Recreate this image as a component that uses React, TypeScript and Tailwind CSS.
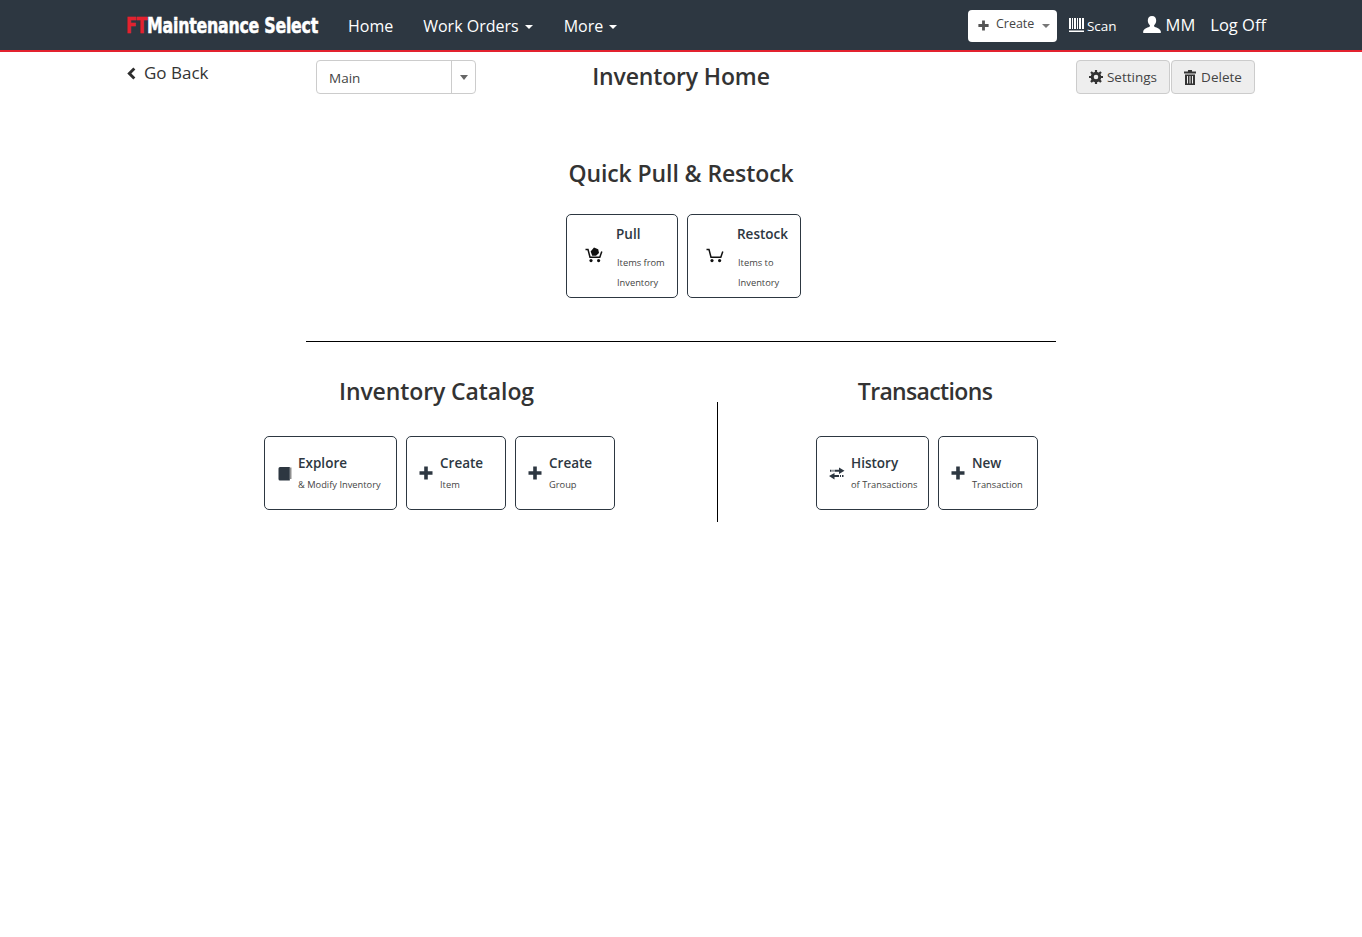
import React from "react";

const F = "font-['Open_Sans','Noto_Sans',sans-serif]";

function Plus({ className = "" }: { className?: string }) {
  return (
    <svg viewBox="0 0 14 14" className={className} fill="currentColor">
      <path d="M5.2 0.5h3.6v4.7h4.7v3.6H8.8v4.7H5.2V8.8H0.5V5.2h4.7z" />
    </svg>
  );
}

function Cart({ full = false }: { full?: boolean }) {
  return (
    <svg viewBox="0 0 18 16" className="w-[18px] h-[16px] text-[#111]" fill="none">
      <path d="M0.5 2.5H3L5 10.2H14.8L16.8 4.5" stroke="currentColor" strokeWidth="1.5" />
      <circle cx="6" cy="13.6" r="1.6" fill="currentColor" />
      <circle cx="13.6" cy="13.6" r="1.6" fill="currentColor" />
      {full && <path d="M9 0.5L13.2 2.2L14 6L11 8.8H7.2L5.6 4.5z" fill="currentColor" />}
    </svg>
  );
}

function Book() {
  return (
    <svg viewBox="0 0 14 15" className="w-[14px] h-[15px]">
      <path d="M12 1.500h1.500V13H12z" fill="#8f8f8f" />
      <path d="M0.500 2.500a1.500 1.500 0 0 1 1.500-1.500h9.800V14.500H2a1.500 1.500 0 0 1-1.500-1.500z" fill="#2d3741" />
    </svg>
  );
}

function Transfer() {
  return (
    <svg viewBox="0 0 16 13" className="w-[16px] h-[13px] text-[#2d3741]" fill="currentColor">
      <path d="M1 2.800h1.500v2H1zM3.500 2.800h1v2h-1zM5.500 2.800h4.500V0.500L15.500 3.800 10 6.900V4.800H5.500z" />
      <path d="M14.500 8h-1.500v2h1.500zM12 8h-1v2h1zM10 8H5.500V5.900L0 9.100 5.500 12.400V10H10z" />
    </svg>
  );
}

function Card({
  icon, title, lines, w, h, iconW, tall,
}: {
  icon: React.ReactNode; title: string; lines: string[]; w: string; h: string; iconW: string; tall?: boolean;
}) {
  return (
    <div className={`${w} ${h} ${iconW} flex items-center border border-[#2d3741] rounded-[5px] bg-white shrink-0`}>
      <div className="flex items-center shrink-0">{icon}</div>
      <div className={`flex flex-col min-w-0 ${tall ? "pt-[4px]" : "pt-[1px]"}`}>
        <div className={`text-[13.5px] font-semibold leading-[20px] text-[#2d3741] whitespace-nowrap ${tall ? "mb-[9px] -ml-[1px]" : "mb-[2px]"}`}>{title}</div>
        {lines.map((l) => (
          <div key={l} className="text-[9.3px] text-[#444] leading-[20px] whitespace-nowrap">{l}</div>
        ))}
      </div>
    </div>
  );
}

export default function App() {
  return (
    <div className={`${F} min-h-[937px] bg-white text-[#2d2d2d]`}>
      <nav className="h-[52px] bg-[#2d3741] border-b-2 border-[#e3222f]">
        <div className="w-[1170px] mx-auto h-[50px] flex items-center pl-[30px] text-white">
          <div className="w-[222px] h-[50px] flex items-center shrink-0 overflow-visible">
            <span className="font-['DejaVu_Sans',sans-serif] font-bold text-[20px] tracking-[-0.3px] whitespace-nowrap origin-left scale-x-[0.79] scale-y-[1.08] inline-block [-webkit-text-stroke:0.5px_currentColor]">
              <span className="text-[#e3222f]">FT</span>Maintenance Select
            </span>
          </div>
          <div className="flex items-center text-[16px] gap-[30px] pt-[1px]">
            <span>Home</span>
            <span className="flex items-center gap-[6px]">Work Orders <i className="w-0 h-0 mt-[3px] border-x-[4px] border-x-transparent border-t-[4px] border-t-white" /></span>
            <span className="flex items-center gap-[6px] ml-[1px]">More <i className="w-0 h-0 mt-[3px] border-x-[4px] border-x-transparent border-t-[4px] border-t-white" /></span>
          </div>
          <div className="ml-auto flex items-center text-[16.5px]">
            <div className="w-[89px] h-[32px] mt-[1px] bg-white rounded-[4px] text-[#444] flex items-center pl-[10px] text-[12.5px]">
              <Plus className="w-[11px] h-[11px] text-[#555] mr-[7px]" />
              <span className="-mt-[2px]">Create</span>
              <i className="w-0 h-0 ml-[8px] border-x-[4px] border-x-transparent border-t-[4px] border-t-[#777]" />
            </div>
            <svg viewBox="0 0 15 14" className="w-[15px] h-[14px] ml-[12px] text-white" fill="currentColor">
              <path d="M0 0h2v11H0zM3 0h1v11H3zM5 0h2v11H5zM8 0h1v11H8zM10 0h2v11h-2zM13 0h2v11h-2zM0 12.500h15V14H0z" />
            </svg>
            <span className="text-[13.5px] ml-[3px] pt-[2px]">Scan</span>
            <svg viewBox="0 0 18 17" className="w-[18px] h-[17px] ml-[26px] text-white -mt-[2px]" fill="currentColor">
              <path d="M9 0c2.800 0 4.200 2 4.200 4.600 0 2-.9 3.700-2 4.600-.3.500-.2 1.200.4 1.500 2.500 1.100 5.600 2 6.200 4.600V17H.2v-1.700c.6-2.600 3.700-3.500 6.200-4.600.6-.3.7-1 .4-1.500-1.100-.9-2-2.600-2-4.600C4.800 2 6.200 0 9 0z" />
            </svg>
            <span className="ml-[5px] pt-[1px]">MM</span>
            <span className="ml-[15px] pt-[1px]">Log Off</span>
          </div>
        </div>
      </nav>

      <main className="w-[1170px] mx-auto">
        <div className="grid grid-cols-[1fr_auto_1fr] items-start pt-[8px] h-[42px]">
          <div className="flex items-start pl-[30px]">
            <div className="w-[190px] flex items-center text-[17px] leading-[26px] text-[#333]">
              <svg viewBox="0 0 10 14" className="w-[10px] h-[13px] text-[#2d2d2d] mr-[8px]" fill="currentColor">
                <path d="M7.500 0.500L9.700 2.700 5.400 7l4.300 4.300L7.500 13.500 1 7z" />
              </svg>
              Go Back
            </div>
            <div className="w-[160px] h-[34px] flex border border-[#ccc] rounded-[4px] text-[13.5px] text-[#444]">
              <div className="flex-1 flex items-center pl-[12px] pt-[2px] border-r border-[#ccc]">Main</div>
              <div className="w-[23px] flex items-center justify-center">
                <i className="w-0 h-0 border-x-[4.500px] border-x-transparent border-t-[5px] border-t-[#666]" />
              </div>
            </div>
          </div>
          <h1 className="text-[23px] font-semibold tracking-[-0.15px] leading-[34px] -mt-[1px] text-center text-[#333] whitespace-nowrap">Inventory Home</h1>
          <div className="flex justify-end pr-[11px] gap-[1px] text-[13.5px] text-[#444]">
            <div className="h-[34px] w-[94px] flex items-center justify-center gap-[4px] bg-[#eeeeee] border border-[#ccc] rounded-[4px]">
              <svg viewBox="0 0 14 14" className="w-[14px] h-[14px] text-[#333]">
                <circle cx="7" cy="7" r="3.800" fill="none" stroke="currentColor" strokeWidth="3" />
                <path d="M7 0v14M0 7h14M2 2l10 10M12 2L2 12" stroke="currentColor" strokeWidth="2.200" strokeDasharray="2.500 9 2.500 0" />
              </svg>
              Settings
            </div>
            <div className="h-[34px] w-[84px] flex items-center justify-center gap-[5px] bg-[#eeeeee] border border-[#ccc] rounded-[4px]">
              <svg viewBox="0 0 12 15" className="w-[12px] h-[15px] text-[#333]" fill="currentColor">
                <path d="M4 0h4v1.500h4V3.500H0V1.500h4zM1 4.500h10V15H1zM3 6v7.500h1V6zM5.500 6v7.500h1V6zM8 6v7.500h1V6z" fillRule="evenodd" />
              </svg>
              Delete
            </div>
          </div>
        </div>

        <h2 className="mt-[62px] text-[23px] font-semibold tracking-[-0.1px] leading-[34px] text-center text-[#333]">Quick Pull &amp; Restock</h2>
        <div className="mt-[24px] pl-[5px] flex justify-center gap-[9px]">
          <Card tall w="w-[112px]" h="h-[84px]" iconW="pl-[18px]" title="Pull" lines={["Items from", "Inventory"]}
            icon={<span className="w-[32px] -mt-[2px]"><Cart full /></span>} />
          <Card tall w="w-[114px]" h="h-[84px]" iconW="pl-[18px]" title="Restock" lines={["Items to", "Inventory"]}
            icon={<span className="w-[32px] -mt-[2px]"><Cart /></span>} />
        </div>

        <div className="mt-[43px] mx-auto w-[750px] border-t border-black" />

        <div className="mt-[32px] flex pl-[61px]">
          <section className="w-[560px]">
            <h2 className="text-[23px] font-semibold tracking-[-0.1px] leading-[34px] text-center text-[#333] -ml-[1px] whitespace-nowrap">Inventory Catalog</h2>
            <div className="mt-[28px] ml-[107px] flex gap-[9px]">
              <Card w="w-[133px]" h="h-[74px]" iconW="pl-[13px]" title="Explore" lines={["& Modify Inventory"]}
                icon={<span className="w-[20px]"><Book /></span>} />
              <Card w="w-[100px]" h="h-[74px]" iconW="pl-[12px]" title="Create" lines={["Item"]}
                icon={<span className="w-[21px] text-[#2d3741]"><Plus className="w-[14px] h-[14px]" /></span>} />
              <Card w="w-[100px]" h="h-[74px]" iconW="pl-[12px]" title="Create" lines={["Group"]}
                icon={<span className="w-[21px] text-[#2d3741]"><Plus className="w-[14px] h-[14px]" /></span>} />
            </div>
          </section>
          <div className="self-end w-px h-[120px] bg-black -mb-[12px]" />
          <section className="w-[414px]">
            <h2 className="text-[23px] font-semibold leading-[34px] tracking-[-0.65px] text-center text-[#333] whitespace-nowrap">Transactions</h2>
            <div className="mt-[28px] ml-[98px] flex gap-[9px]">
              <Card w="w-[113px]" h="h-[74px]" iconW="pl-[12px]" title="History" lines={["of Transactions"]}
                icon={<span className="w-[22px]"><Transfer /></span>} />
              <Card w="w-[100px]" h="h-[74px]" iconW="pl-[12px]" title="New" lines={["Transaction"]}
                icon={<span className="w-[21px] text-[#2d3741]"><Plus className="w-[14px] h-[14px]" /></span>} />
            </div>
          </section>
        </div>
      </main>
    </div>
  );
}
